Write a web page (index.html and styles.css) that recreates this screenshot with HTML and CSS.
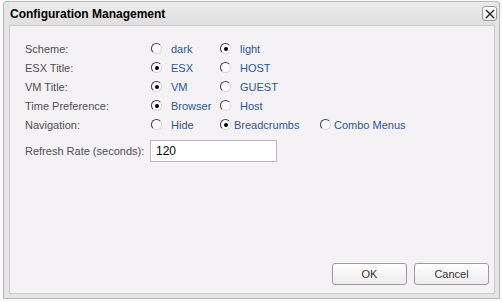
FILE: index.html
```html
<!DOCTYPE html>
<html lang="en">
<head>
<meta charset="UTF-8">
<title>Configuration Management</title>
<link rel="stylesheet" href="styles.css">
</head>
<body>

<div class="window">
    <div class="titlebar">
        <span class="title">Configuration Management</span>
        <span class="close">
            <svg width="10" height="10" viewBox="0 0 10 10"><path d="M1 1 L9 9 M9 1 L1 9" stroke="#222" stroke-width="1.4"/></svg>
        </span>
    </div>

    <div class="panel">
        <div class="row">
            <span class="label">Scheme:</span>
            <span class="opt"><i class="radio"></i>dark</span>
            <span class="opt"><i class="radio on"></i>light</span>
        </div>
        <div class="row">
            <span class="label">ESX Title:</span>
            <span class="opt"><i class="radio on"></i>ESX</span>
            <span class="opt"><i class="radio"></i>HOST</span>
        </div>
        <div class="row">
            <span class="label">VM Title:</span>
            <span class="opt"><i class="radio on"></i>VM</span>
            <span class="opt"><i class="radio"></i>GUEST</span>
        </div>
        <div class="row">
            <span class="label">Time Preference:</span>
            <span class="opt"><i class="radio on"></i>Browser</span>
            <span class="opt"><i class="radio"></i>Host</span>
        </div>
        <div class="row nav">
            <span class="label">Navigation:</span>
            <span class="opt"><i class="radio"></i>Hide</span>
            <span class="opt wide"><i class="radio on"></i>Breadcrumbs</span>
            <span class="opt last"><i class="radio"></i>Combo Menus</span>
        </div>
        <div class="row refresh">
            <span class="label">Refresh Rate (seconds):</span>
            <input class="field" type="text" value="120">
        </div>

        <div class="buttons">
            <button class="btn">OK</button>
            <button class="btn">Cancel</button>
        </div>
    </div>
</div>

</body>
</html>
```

FILE: styles.css
```css
/* dialog styles */
body {
    margin: 0;
    width: 502px;
    height: 302px;
    overflow: hidden;
    background-color: #fbfbfb;
    font-family: "Liberation Sans", Arial, sans-serif;
    font-size: 11px;
}

.window {
    margin: 1px 0 0 3px;
    width: 497px;
    height: 298px;
    box-sizing: border-box;
    border: 1px solid #b6b6b6;
    border-radius: 3px 3px 0 0;
    background-color: #e6e5e6;
    padding: 0 4px 4px 5px;
    display: flex;
    flex-direction: column;
}

.titlebar {
    height: 23px;
    display: flex;
    align-items: center;
    justify-content: space-between;
    background: linear-gradient(#ececec, #e0dfe0);
}

.title {
    font-weight: bold;
    font-size: 12px;
    color: #000;
    padding-left: 1px;
}

.close {
    width: 13px;
    height: 13px;
    margin-right: -2px;
    border: 1px solid #999;
    border-radius: 3px;
    background: linear-gradient(#fff, #ececec);
    display: flex;
    align-items: center;
    justify-content: center;
}

.panel {
    flex: 1;
    border: 1px solid #cbc9cb;
    background-color: #f5f2f5;
    padding: 13px 5px 8px 15px;
    display: flex;
    flex-direction: column;
}

.row {
    height: 19px;
    display: flex;
    align-items: center;
}

.label {
    width: 126px;
    color: #505050;
}

.opt {
    width: 69px;
    display: flex;
    align-items: center;
    white-space: nowrap;
    color: #29579a;
}

.radio {
    width: 9px;
    height: 9px;
    margin-right: 9px;
    border: 1px solid;
    border-color: #3c3c3c #d8d8d8 #d8d8d8 #3c3c3c;
    border-radius: 50%;
    background-color: #fff;
    display: flex;
    align-items: center;
    justify-content: center;
}

.radio.on::after {
    content: "";
    width: 4px;
    height: 4px;
    border-radius: 50%;
    background-color: #000;
}

.nav .opt.wide {
    width: 100px;
}

.nav .opt.last {
    width: auto;
}

.nav .opt.wide .radio,
.nav .opt.last .radio {
    margin-right: 3px;
}

.refresh {
    height: 24px;
    margin-top: 5px;
}

.field {
    width: 127px;
    height: 22px;
    box-sizing: border-box;
    margin-left: -1px;
    border: 1px solid #b8b8b8;
    background-color: #fff;
    padding: 2px 5px;
    font-family: "Liberation Sans", Arial, sans-serif;
    font-size: 12px;
    color: #000;
}

.buttons {
    margin-top: auto;
    display: flex;
    justify-content: flex-end;
    gap: 7px;
}

.btn {
    width: 75px;
    height: 22px;
    border: 1px solid #9c9c9c;
    border-radius: 3px;
    background: linear-gradient(#ffffff, #ececec);
    font-family: "Liberation Sans", Arial, sans-serif;
    font-size: 11px;
    color: #333;
}
```
